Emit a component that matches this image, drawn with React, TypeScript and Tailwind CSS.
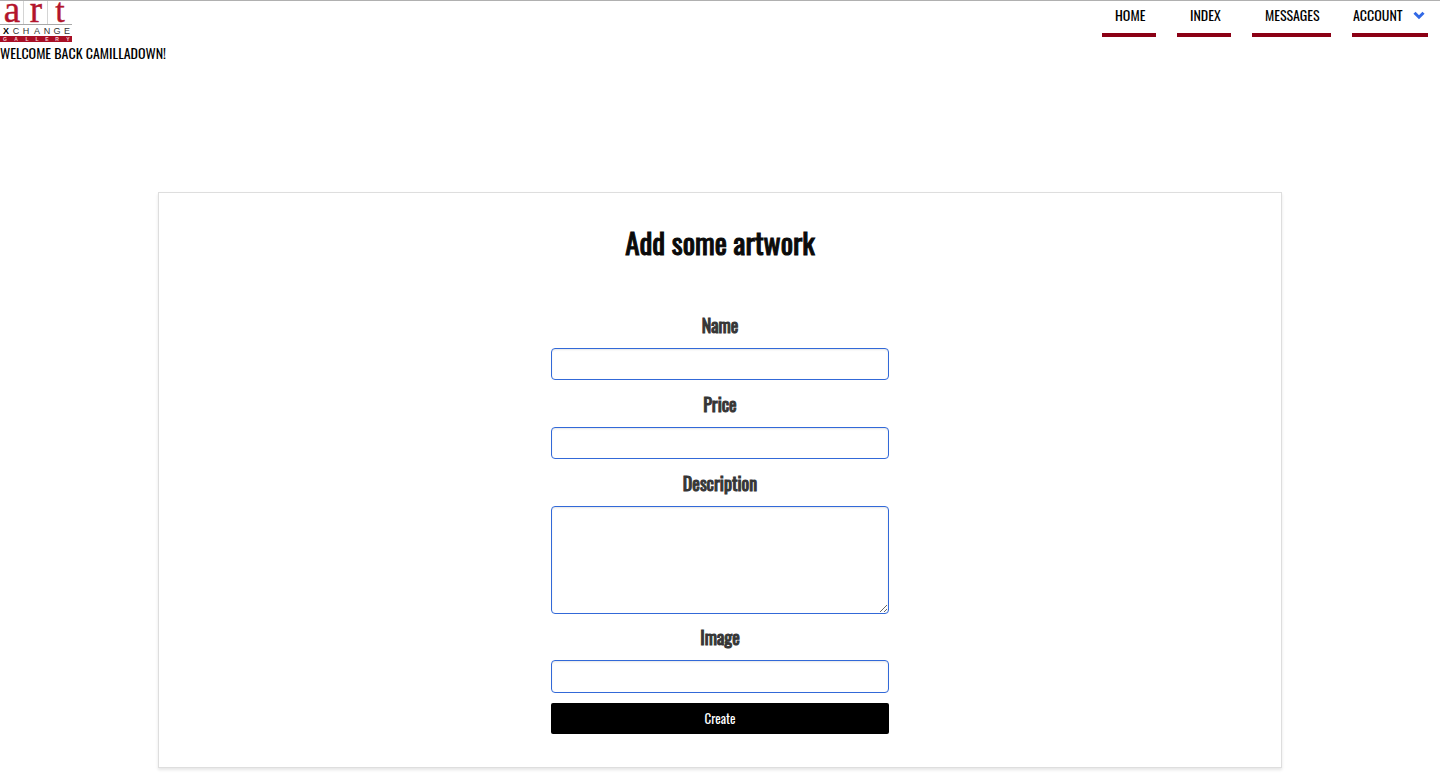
import { ChevronDown } from 'lucide-react';

const navLinks = [
  { label: 'HOME', width: 'w-[54px]' },
  { label: 'INDEX', width: 'w-[54px]' },
  { label: 'MESSAGES', width: 'w-[79px]' },
];

const fieldClass =
  'block w-full rounded-[4px] border border-[#3269d8] bg-white px-2 text-base text-[#363636] shadow-[inset_0_1px_2px_rgba(10,10,10,0.1)] outline-none';
const labelClass = 'block text-center text-[18px] leading-7 font-normal text-[#363636] [-webkit-text-stroke:1px_#363636]';

function Logo() {
  return (
    <svg width="72" height="41" viewBox="0 0 72 41" role="img" aria-label="Art Xchange Gallery" className="block">
      <rect width="72" height="41" fill="#fff" />
      <path d="M23.5 0V23M47.5 0V23" stroke="#d4d4d4" />
      <g fill="#b3152c" stroke="#b3152c" strokeWidth="0.4" fontFamily="'Liberation Serif', serif" fontSize="37" textAnchor="middle">
        <text x="12" y="21">a</text>
        <text x="36" y="21">r</text>
        <text x="60" y="21" fontSize="34">t</text>
      </g>
      <path d="M0 23.5H72" stroke="#a9a9a9" />
      <g fill="#333" fontFamily="'Liberation Sans', sans-serif" fontSize="9" textAnchor="middle">
        <text x="6" y="33" fill="#000" fontWeight="bold">X</text>
        <text x="16" y="33">C</text>
        <text x="26" y="33">H</text>
        <text x="37" y="33">A</text>
        <text x="47" y="33">N</text>
        <text x="57" y="33">G</text>
        <text x="67" y="33">E</text>
      </g>
      <rect y="35" width="72" height="6" fill="#a80f25" />
      <g fill="#f3cdd2" fontFamily="'Liberation Sans', sans-serif" fontSize="5" fontWeight="bold" textAnchor="middle">
        <text x="5" y="40">G</text>
        <text x="16" y="40">A</text>
        <text x="27" y="40">L</text>
        <text x="37" y="40">L</text>
        <text x="47" y="40">E</text>
        <text x="57" y="40">R</text>
        <text x="68" y="40">Y</text>
      </g>
    </svg>
  );
}

export default function App() {
  return (
    <div className="bg-white pb-4 font-['Oswald','Liberation_Sans_Narrow',sans-serif] text-black">
      <header className="flex items-start justify-between border-t border-[#b0b0b0]">
        <div>
          <a href="#home">
            <Logo />
          </a>
          <p className="text-[14px] leading-[22px]">WELCOME BACK CAMILLADOWN!</p>
        </div>
        <nav className="flex gap-[21px] pr-3 text-[14px] leading-7">
          {navLinks.map((link) => (
            <a
              key={link.label}
              href={'#' + link.label.toLowerCase()}
              className={`${link.width} h-9 border-b-4 border-[#8b0015] pl-[13px] whitespace-nowrap`}
            >
              {link.label}
            </a>
          ))}
          <button
            type="button"
            className="flex h-9 w-[76px] items-start justify-between border-b-4 border-[#8b0015] pl-px whitespace-nowrap"
          >
            ACCOUNT
            <ChevronDown className="mt-[5px] size-[18px] shrink-0" color="#3269e6" strokeWidth={4} strokeLinecap="butt" strokeLinejoin="miter" />
          </button>
        </nav>
      </header>

      <main className="mx-auto mt-32 w-[78%] border border-[#dedede] bg-white py-8 shadow-[0_2px_3px_rgba(10,10,10,0.1)]">
        <h1 className="text-center text-[29px] leading-[34px] font-normal text-[#0a0a0a] [-webkit-text-stroke:1px_#0a0a0a]">Add some artwork</h1>
        <form className="mx-auto mt-[52px] w-full max-w-[338px]" onSubmit={(e) => e.preventDefault()}>
          <label htmlFor="name" className={labelClass}>Name</label>
          <input id="name" type="text" className={`${fieldClass} mt-[9px] h-8`} />
          <label htmlFor="price" className={`${labelClass} mt-[10px]`}>Price</label>
          <input id="price" type="text" className={`${fieldClass} mt-[9px] h-8`} />
          <label htmlFor="description" className={`${labelClass} mt-[10px]`}>Description</label>
          <textarea id="description" className={`${fieldClass} mt-[9px] h-27 resize-y`} />
          <label htmlFor="image" className={`${labelClass} mt-[9px]`}>Image</label>
          <input id="image" type="text" className={`${fieldClass} mt-[9px] h-[33px]`} />
          <button type="submit" className="mt-[10px] mb-px block h-[31px] w-full rounded-[2px] bg-black text-[13px] text-white">
            Create
          </button>
        </form>
      </main>
    </div>
  );
}
